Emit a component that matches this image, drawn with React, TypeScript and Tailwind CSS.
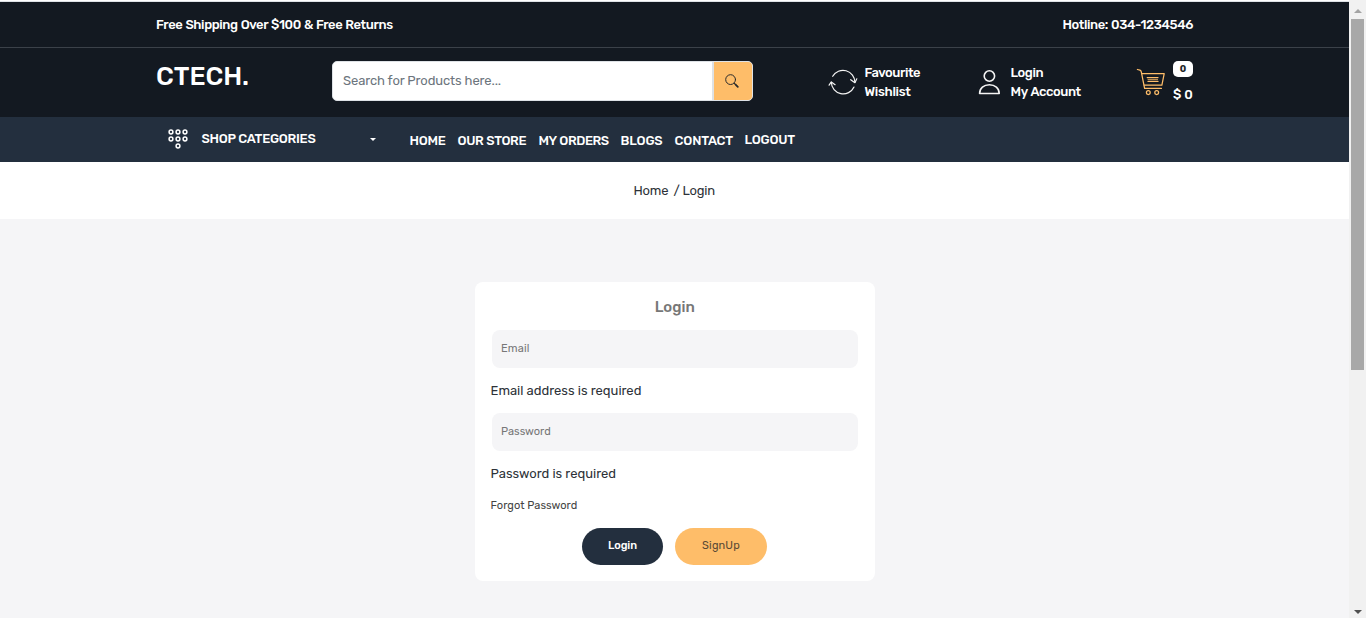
import React from "react";

const navItems = [
  { label: "HOME", cls: "w-[48px] tracking-[-0.3px] pt-[1px]" },
  { label: "OUR STORE", cls: "w-[81px] tracking-[-0.4px] [word-spacing:0.4px] pt-[1px]" },
  { label: "MY ORDERS", cls: "w-[82px] tracking-[-0.45px] [word-spacing:0.4px] pt-[1px]" },
  { label: "BLOGS", cls: "w-[54px] tracking-[-0.15px] pt-[1px]" },
  { label: "CONTACT", cls: "w-[70px] tracking-[-0.15px] pt-[1px]" },
  { label: "LOGOUT", cls: "w-[60px] tracking-[-0.2px]" },
];

function CompareIcon() {
  return (
    <svg width="30" height="28" viewBox="0 0 30 28" fill="none" stroke="#f4f4f4" strokeWidth="1.2" strokeLinecap="round" strokeLinejoin="round">
      <path d="M4.7 8.3A11.9 11.9 0 0 1 26.9 14.3" />
      <path d="M22.7 11.7L26.9 14.7L28.8 10.8" />
      <path d="M26 19A11.9 11.9 0 0 1 3.3 14.3" />
      <path d="M1.1 17.2L3.3 13.9L7.1 16.7" />
    </svg>
  );
}

function UserIcon() {
  return (
    <svg width="22" height="26" viewBox="0 0 22 26" fill="none" stroke="#f4f4f4" strokeWidth="1.6" strokeLinejoin="round">
      <circle cx="11.4" cy="7" r="5.2" />
      <path d="M1.6 24.5C1.6 19.1 5.8 15.7 11.4 15.7S21.2 19.1 21.2 24.5Z" />
    </svg>
  );
}

function CartIcon() {
  return (
    <svg width="30" height="28" viewBox="0 0 30 28" fill="none" stroke="#febd69" strokeWidth="1.25" strokeLinecap="round" strokeLinejoin="round">
      <path d="M1.4 1.5L3.9 2.1Q5 2.6 5.3 3.8L8.6 20.4H25.4" />
      <path d="M5.8 5.7H28.2L25.9 17.1H8.2" />
      <path d="M11.2 9.5H22M12 13.4H22" />
      <path d="M12 11.5H21.6" strokeWidth="0.7" />
      <circle cx="12.3" cy="24.6" r="1.9" />
      <circle cx="20.7" cy="24.6" r="1.9" />
    </svg>
  );
}

function GridIcon() {
  const dots = [[3, 3], [10, 3], [17, 3], [3, 10], [10, 10], [17, 10], [10, 17]];
  return (
    <svg width="20" height="20" viewBox="0 0 20 20" fill="none" stroke="#fff" strokeWidth="1.5">
      {dots.map(([x, y]) => (
        <circle key={`${x}-${y}`} cx={x} cy={y} r="1.9" />
      ))}
    </svg>
  );
}

function Field({ label, cls }: { label: string; cls: string }) {
  return (
    <div className="ml-px flex h-[38px] w-[366px] items-center rounded-[8px] bg-[#f5f5f7] pl-[9px] pb-[2px]">
      <span className={cls}>{label}</span>
    </div>
  );
}

export default function App() {
  return (
    <div className="flex h-[618px] w-[1366px] overflow-hidden whitespace-nowrap bg-[#f5f5f7] font-['Rubik','Roboto',sans-serif] text-[13px] leading-[19px] text-[#2d3238]">
      <div className="flex w-[1349px] flex-col">
        <div className="h-[2px] border-b border-[#dee2e6] bg-white" />
        <div className="flex h-[46px] items-center justify-between border-b border-[#3b4149] bg-[#131921] pl-[156px] pr-[156px] font-medium text-white">
          <span className="tracking-[-0.41px] [word-spacing:0.5px]">Free Shipping Over $100 &amp; Free Returns</span>
          <span className="tracking-[-0.41px] [word-spacing:0.5px]">Hotline: 034-1234546</span>
        </div>

        <header className="flex h-[69px] bg-[#131921] pl-[156px] font-medium text-white">
          <div className="w-[176px] pt-[13px] text-[26px] leading-[31px]">
            <span>CTECH.</span>
          </div>
          <div className="mt-[13px] flex h-[40px] w-[421px] overflow-hidden rounded-[5px] border border-[#dee2e6] bg-white font-normal">
            <div className="w-[379px] pl-[10px] pt-[9px] text-[#6c757d]">
              <span className="tracking-[-0.11px]">Search for Products here...</span>
            </div>
            <div className="flex grow items-center justify-center border-l-2 border-[#dee2e6] bg-[#febd69] pr-[2px] pb-px">
              <svg width="14" height="14" viewBox="0 0 14 14" fill="none" stroke="#2b2b2b" strokeLinecap="round">
                <circle cx="5.6" cy="5.6" r="4.9" strokeWidth="1" />
                <path d="M9.2 9.2L10.2 10.2" strokeWidth="1" />
                <path d="M10.4 10.4L12.8 12.8" strokeWidth="1.8" />
              </svg>
            </div>
          </div>
          <div className="ml-[75px] flex w-[150px] gap-[6.5px] pt-[15px]">
            <div className="pt-[5px]"><CompareIcon /></div>
            <div className="flex flex-col tracking-[-0.45px]"><span>Favourite</span><span className="tracking-[-0.3px]">Wishlist</span></div>
          </div>
          <div className="flex w-[158px] gap-[10.5px] pt-[15px]">
            <div className="pt-[6px]"><UserIcon /></div>
            <div className="flex flex-col tracking-[-0.4px] [word-spacing:0.8px]"><span>Login</span><span>My Account</span></div>
          </div>
          <div className="flex gap-[7px]">
            <div className="pt-[20px]"><CartIcon /></div>
            <div className="flex flex-col pt-[13px]">
              <span className="flex h-[16px] w-[20px] items-center justify-center rounded-[5px] bg-white text-[9.5px] font-bold leading-none text-[#212529]">0</span>
              <span className="mt-[8px]">$ 0</span>
            </div>
          </div>
        </header>

        <nav className="flex h-[45px] bg-[#232f3e] pl-[168px] font-medium text-white">
          <div className="flex w-[33.5px] pt-[12px]"><GridIcon /></div>
          <span className="w-[168.5px] pt-[12px] tracking-[-0.27px]">SHOP CATEGORIES</span>
          <div className="mt-[21px] h-0 w-[39px]">
            <div className="h-0 w-0 border-x-[3px] border-t-[3px] border-x-transparent border-t-white" />
          </div>
          <div className="flex pt-[13px] pl-[0.5px]">
            {navItems.map((n) => (
              <span key={n.label} className={n.cls}>{n.label}</span>
            ))}
          </div>
        </nav>

        <div className="flex h-[57px] bg-white pl-[633.5px] pt-[19px] tracking-[-0.2px]">
          <span className="w-[40px]">Home</span>
          <span>/ Login</span>
        </div>

        <main className="pl-[475px] pt-[63px]">
          <div className="flex h-[299px] w-[400px] flex-col rounded-[8px] bg-white px-[16px]">
            <h3 className="pr-[0.5px] pt-[16px] text-center text-[15px] font-medium leading-[18px] text-[#777]">
              <span>Login</span>
            </h3>
            <div className="mt-[14px]"><Field label="Email" cls="text-[11px] tracking-[0.15px] text-[#777]" /></div>
            <div className="-ml-[0.5px] mt-[13px]">Email address is required</div>
            <div className="mt-[13px]"><Field label="Password" cls="text-[11px] text-[#777]" /></div>
            <div className="-ml-[0.5px] mt-[13px]">Password is required</div>
            <div className="-ml-[0.5px] mt-[13px] text-[11px] text-[#444] tracking-[0.04px]">Forgot Password</div>
            <div className="mt-[13px] flex justify-center gap-[12px] pr-[2px] text-[11px] leading-[35px]">
              <button className="h-[37px] w-[81px] rounded-[25px] bg-[#232f3e] pb-[2px] pl-px font-medium tracking-[-0.1px] text-white">Login</button>
              <button className="h-[37px] w-[92px] rounded-[25px] bg-[#febd69] pb-[2px] pl-px tracking-[0.15px] text-[#5a4a35]">SignUp</button>
            </div>
          </div>
        </main>
      </div>

      <div className="flex w-[17px] flex-col items-center justify-between bg-[#f1f1f1] pb-[4px] pt-[9px]">
        <div className="flex flex-col items-center gap-[6px]">
          <div className="h-0 w-0 border-x-4 border-b-4 border-x-transparent border-b-[#a3a3a3]" />
          <div className="h-[351px] w-[13px] bg-[#a8a8a8]" />
        </div>
        <div className="h-0 w-0 border-x-4 border-t-4 border-x-transparent border-t-[#505050]" />
      </div>
    </div>
  );
}
